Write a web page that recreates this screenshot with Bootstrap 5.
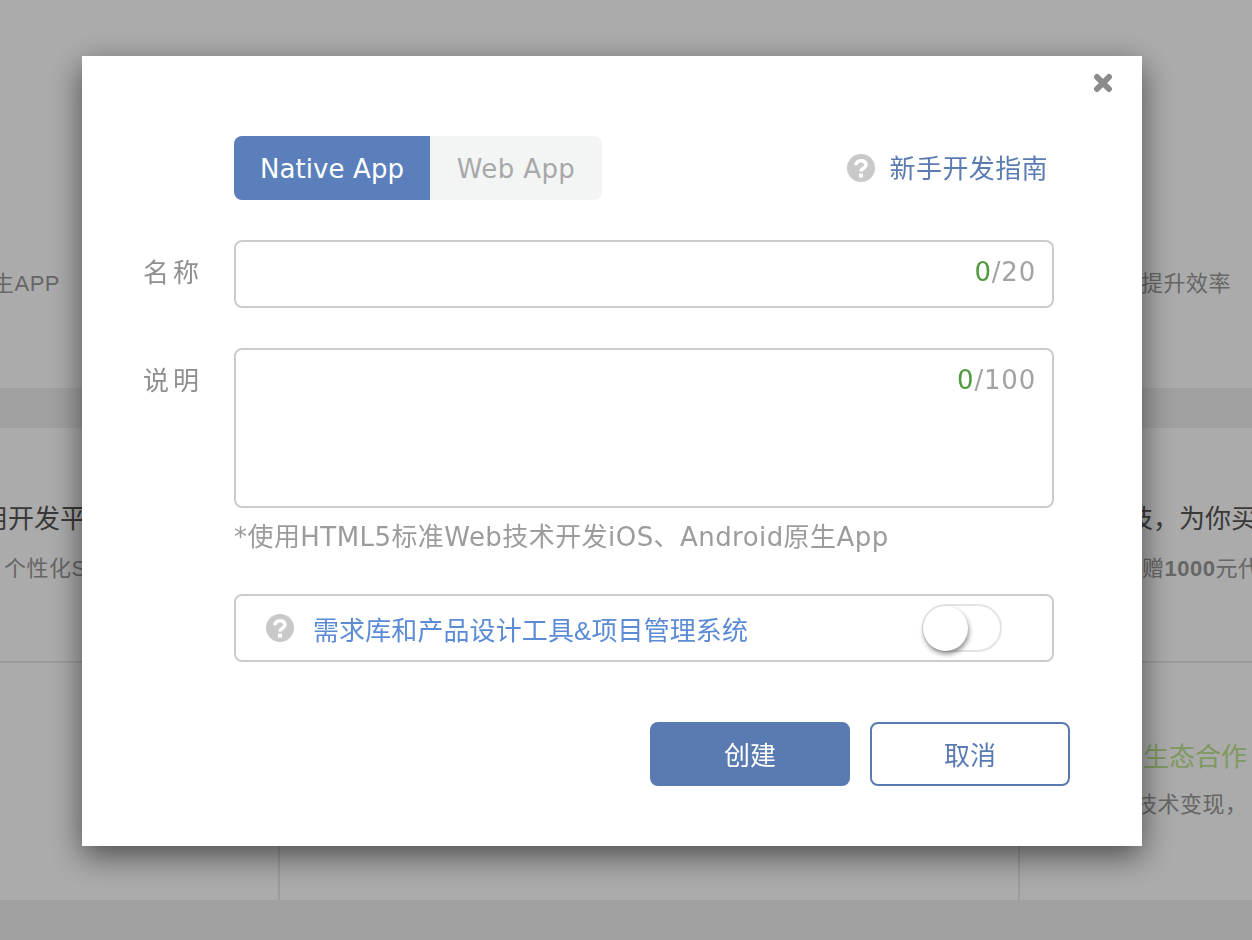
<!DOCTYPE html>
<html lang="zh-CN">
<head>
    <meta charset="UTF-8">
    <title>创建应用</title>
    <link rel="stylesheet" href="https://cdn.jsdelivr.net/npm/bootstrap@5.3.3/dist/css/bootstrap.min.css">
    <style>
        html, body { height: 100%; overflow: hidden; }
        body {
            background: #fff;
            font-family: "Liberation Sans", "Noto Sans CJK SC", sans-serif;
        }

        /* page behind the dialog */
        .bg-top { height: 388px; padding-top: 270px; }
        .bg-band { height: 40px; background: #f0f0f0; }
        .bg-mid { height: 235px; padding-top: 74px; border-bottom: 2px solid #e9e9e9; }
        .bg-low { height: 237px; padding-top: 77px; }
        .bg-grid { display: grid; grid-template-columns: 280px 738px 234px; white-space: nowrap; }
        .bg-side { overflow: hidden; }
        .bg-low .bg-side:first-child { border-right: 2px solid #e9e9e9; margin-top: -77px; height: 237px; }
        .bg-low .bg-side:last-child { border-left: 2px solid #e9e9e9; margin-top: -77px; padding-top: 77px; height: 237px; }
        .bg-title { font-size: 26px; line-height: 34px; color: #555; }
        .bg-sub { font-size: 22px; line-height: 28px; color: #999; letter-spacing: .5px; }
        .bg-green { color: #bde58f; }
        .pad-end-a { display: flex; justify-content: flex-end; padding-right: 220px; }
        .pad-end-b { display: flex; justify-content: flex-end; padding-right: 168px; }
        .pad-start-a { padding-left: 123px; }
        .pad-start-b { padding-left: 109px; }
        .pad-start-c { padding-left: 124px; }
        .pad-start-e { padding-left: 123px; }
        .pad-start-d { padding-left: 115px; }
        .gap-sub { margin-top: 19px; }
        .gap-sub-low { margin-top: 17px; }

        /* dialog */
        .dim-layer {
            position: fixed;
            inset: 0;
            background: rgba(0, 0, 0, .33);
            padding: 56px 0 0 82px;
        }
        .dialog-box.modal-content {
            width: 1060px;
            height: 790px;
            background: #fff;
            border: 0;
            border-radius: 0;
            box-shadow: 0 10px 30px rgba(0, 0, 0, .55);
            padding: 80px 72px 60px 152px;
            color: #999;
            font-size: 26px;
        }
        .close-x {
            position: absolute;
            top: 17px;
            right: 29px;
            width: 20px;
            height: 20px;
            padding: 0;
            border: 0;
            background: none;
            line-height: 0;
        }
        .latin { font-family: "DejaVu Sans", "Noto Sans CJK SC", sans-serif; }
        .tab-pair { width: 368px; height: 64px; }
        .tab-pair .btn {
            flex: none;
            height: 64px;
            padding: 2px 0 0;
            border: 0;
            font-size: 26px;
            line-height: 62px;
            --bs-btn-border-radius: 8px;
            font-family: "DejaVu Sans", sans-serif;
        }
        .tab-on { width: 196px; background: #5a7fbb; color: #fff; letter-spacing: .1px; }
        .tab-on:hover { background: #5a7fbb; color: #fff; }
        .tab-pair .btn.tab-off { width: 172px; background: #f3f5f5; color: #a8a8a8; letter-spacing: .4px; }
        .guide-link { color: #5a7cb2; text-decoration: none; letter-spacing: .4px; gap: 15px; margin-right: 6px; }
        .guide-text { position: relative; top: 1px; }
        .field-row { width: 820px; }
        .field-row + .field-row { margin-top: 40px; }
        .field-label {
            position: absolute;
            left: -91px;
            top: 16px;
            width: 60px;
            color: #8f8f8f;
            letter-spacing: 4px;
            line-height: 34px;
            white-space: nowrap;
        }
        .field-input.form-control {
            border: 2px solid #ccc;
            border-radius: 8px;
            box-shadow: none;
            resize: none;
        }
        input.field-input { height: 68px; }
        textarea.field-input { height: 160px; }
        .counter {
            position: absolute;
            top: 15px;
            right: 18px;
            line-height: 34px;
            color: #a3a3a3;
            letter-spacing: .8px;
        }
        .counter b { font-weight: 400; color: #4f9a3c; }
        .hint-line { line-height: 34px; margin-top: 12px; color: #9c9c9c; white-space: nowrap; letter-spacing: .44px; }
        .switch-row {
            height: 68px;
            margin-top: 40px;
            border: 2px solid #ccc;
            border-radius: 8px;
            padding-left: 30px;
        }
        .switch-text { color: #5c8bd6; margin-left: 19px; position: relative; top: 3px; letter-spacing: .1px; }
        .toggle-track {
            position: absolute;
            left: 686px;
            top: 8px;
            width: 80px;
            height: 48px;
            border: 2px solid #e4e4e4;
            border-radius: 24px;
            background: #fff;
        }
        .toggle-knob {
            position: absolute;
            left: -1px;
            top: 0;
            width: 45px;
            height: 45px;
            border-radius: 50%;
            background: #fff;
            box-shadow: 1px 3px 5px rgba(0, 0, 0, .45);
        }
        .action-row { width: 836px; margin-top: 60px; gap: 20px; }
        .action-btn.btn {
            width: 200px;
            height: 64px;
            padding: 4px 0 0;
            font-size: 26px;
            line-height: 56px;
            border: 2px solid #5a7bb1;
            border-radius: 8px;
        }
        .action-main { background: #5a7bb1; color: #fff; }
        .action-main:hover { background: #5a7bb1; color: #fff; }
        .action-ghost { background: #fff; color: #5a7bb1; }
    </style>
</head>
<body>
    <svg width="0" height="0" class="position-absolute">
        <symbol id="help-dot" viewBox="0 0 28 28">
            <circle cx="14" cy="14" r="14" fill="#c9c9c9"/>
            <path d="M9 11.2C9 5.2 19 5.4 19 10.8C19 14.4 14 14.2 14 17.6" fill="none" stroke="#fff" stroke-width="3.6"/>
            <rect x="12" y="19.6" width="4" height="4" fill="#fff"/>
        </symbol>
    </svg>

    <div class="bg-top bg-grid">
        <div class="bg-side bg-sub pad-end-a"><span>生APP</span></div>
        <div></div>
        <div class="bg-side bg-sub pad-start-a">提升效率</div>
    </div>
    <div class="bg-band"></div>
    <div class="bg-mid bg-grid">
        <div class="bg-side">
            <div class="bg-title pad-end-b"><span>用开发平台</span></div>
            <div class="bg-sub gap-sub ps-1">个性化SDK</div>
        </div>
        <div></div>
        <div class="bg-side">
            <div class="bg-title pad-start-b">技，为你买单</div>
            <div class="bg-sub gap-sub pad-start-c">赠<b>1000</b>元代金券</div>
        </div>
    </div>
    <div class="bg-low bg-grid">
        <div class="bg-side"></div>
        <div></div>
        <div class="bg-side">
            <div class="bg-title bg-green pad-start-e">生态合作</div>
            <div class="bg-sub gap-sub-low pad-start-d">技术变现，</div>
        </div>
    </div>
    <div class="bg-band"></div>

    <div class="dim-layer">
        <div class="modal-content dialog-box">
            <button type="button" class="close-x" aria-label="Close">
                <svg width="20" height="20" viewBox="0 0 20 20"><path d="M4 4L16 16M16 4L4 16" stroke="#8b8b8b" stroke-width="6" stroke-linecap="round"/></svg>
            </button>

            <div class="d-flex align-items-center justify-content-between field-row">
                <div class="btn-group tab-pair">
                    <button type="button" class="btn tab-on">Native App</button>
                    <button type="button" class="btn tab-off ms-0">Web App</button>
                </div>
                <a href="#" class="guide-link d-flex align-items-center">
                    <svg width="28" height="28"><use href="#help-dot"/></svg>
                    <span class="guide-text">新手开发指南</span>
                </a>
            </div>

            <div class="position-relative field-row">
                <label class="field-label">名称</label>
                <input type="text" class="form-control field-input">
                <span class="counter latin"><b>0</b>/20</span>
            </div>

            <div class="position-relative field-row">
                <label class="field-label">说明</label>
                <textarea class="form-control field-input"></textarea>
                <span class="counter latin"><b>0</b>/100</span>
            </div>

            <div class="hint-line latin">*使用HTML5标准Web技术开发iOS、Android原生App</div>

            <div class="d-flex align-items-center position-relative field-row switch-row">
                <svg width="28" height="28"><use href="#help-dot"/></svg>
                <span class="switch-text">需求库和产品设计工具&amp;项目管理系统</span>
                <div class="toggle-track"><div class="toggle-knob"></div></div>
            </div>

            <div class="d-flex justify-content-end action-row">
                <button type="button" class="btn action-btn action-main">创建</button>
                <button type="button" class="btn action-btn action-ghost">取消</button>
            </div>
        </div>
    </div>
    <script src="https://cdn.jsdelivr.net/npm/bootstrap@5.3.3/dist/js/bootstrap.bundle.min.js"></script>
</body>
</html>
